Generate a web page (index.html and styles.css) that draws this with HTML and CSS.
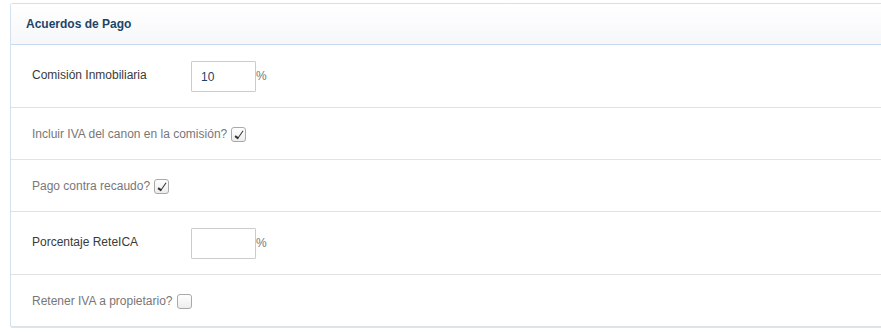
FILE: index.html
```html
<html>

<head>
    <title>Acuerdos de Pago</title>
    <link rel="stylesheet" href="styles.css">
</head>

<body>
    <div class="panel">
        <div class="panel-header">Acuerdos de Pago</div>
        <div class="panel-body">
            <div class="row row-input">
                <label class="label">Comisión Inmobiliaria</label>
                <input class="form-input" type="text" value="10">
                <span class="unit">%</span>
            </div>
            <div class="row row-check">
                <span class="label-check">Incluir IVA del canon en la comisión?</span>
                <span class="check checked"></span>
            </div>
            <div class="row row-check">
                <span class="label-check">Pago contra recaudo?</span>
                <span class="check checked"></span>
            </div>
            <div class="row row-input">
                <label class="label">Porcentaje ReteICA</label>
                <input class="form-input" type="text" value="">
                <span class="unit">%</span>
            </div>
            <div class="row row-check last">
                <span class="label-check">Retener IVA a propietario?</span>
                <span class="check"></span>
            </div>
        </div>
    </div>
</body>

</html>
```

FILE: styles.css
```css
body {
    font-family: "Liberation Sans", Arial, sans-serif;
    font-size: 12px;
    margin: 0;
    padding: 3px 0 0 10px;
    overflow: hidden;
    background-color: #ffffff;
}

.panel {
    width: calc(100% + 20px);
    border: 1px solid #d3e1ee;
    border-bottom: 2px solid #dde3ea;
    border-radius: 3px 0 0 3px;
}

.panel-header {
    height: 40px;
    line-height: 41px;
    padding-left: 15px;
    font-weight: bold;
    color: #1d4468;
    background: linear-gradient(#ffffff, #f6f7f9);
    border-bottom: 1px solid #c6dbee;
}

.row {
    display: flex;
    align-items: flex-start;
    padding-left: 21px;
    border-bottom: 1px solid #e2e2e2;
}

.row.last {
    border-bottom: none;
}

.row-input {
    height: 46px;
    padding-top: 16px;
}

.row-check {
    height: 51px;
    align-items: center;
}

.label {
    width: 159px;
    padding-top: 7px;
    color: #3a3a3a;
}

.form-input {
    width: 65px;
    height: 31px;
    margin: 0;
    padding: 0 9px;
    border: 1px solid #cccccc;
    border-radius: 1px;
    font-family: "Liberation Sans", Arial, sans-serif;
    font-size: 12px;
    color: #1d4468;
    box-sizing: border-box;
}

.unit {
    padding-top: 8px;
    color: #777777;
}

.label-check {
    color: #777777;
}

.check {
    display: inline-block;
    width: 13px;
    height: 13px;
    margin-left: 4px;
    margin-top: 1px;
    border: 1px solid #a9a9a9;
    border-radius: 3px;
    background: linear-gradient(#ffffff, #ededed);
    position: relative;
}

.check.checked::after {
    content: "";
    position: absolute;
    left: 5px;
    top: 1px;
    width: 3px;
    height: 8px;
    border: solid #333333;
    border-width: 0 1.5px 2px 0;
    transform: rotate(35deg);
}
```
